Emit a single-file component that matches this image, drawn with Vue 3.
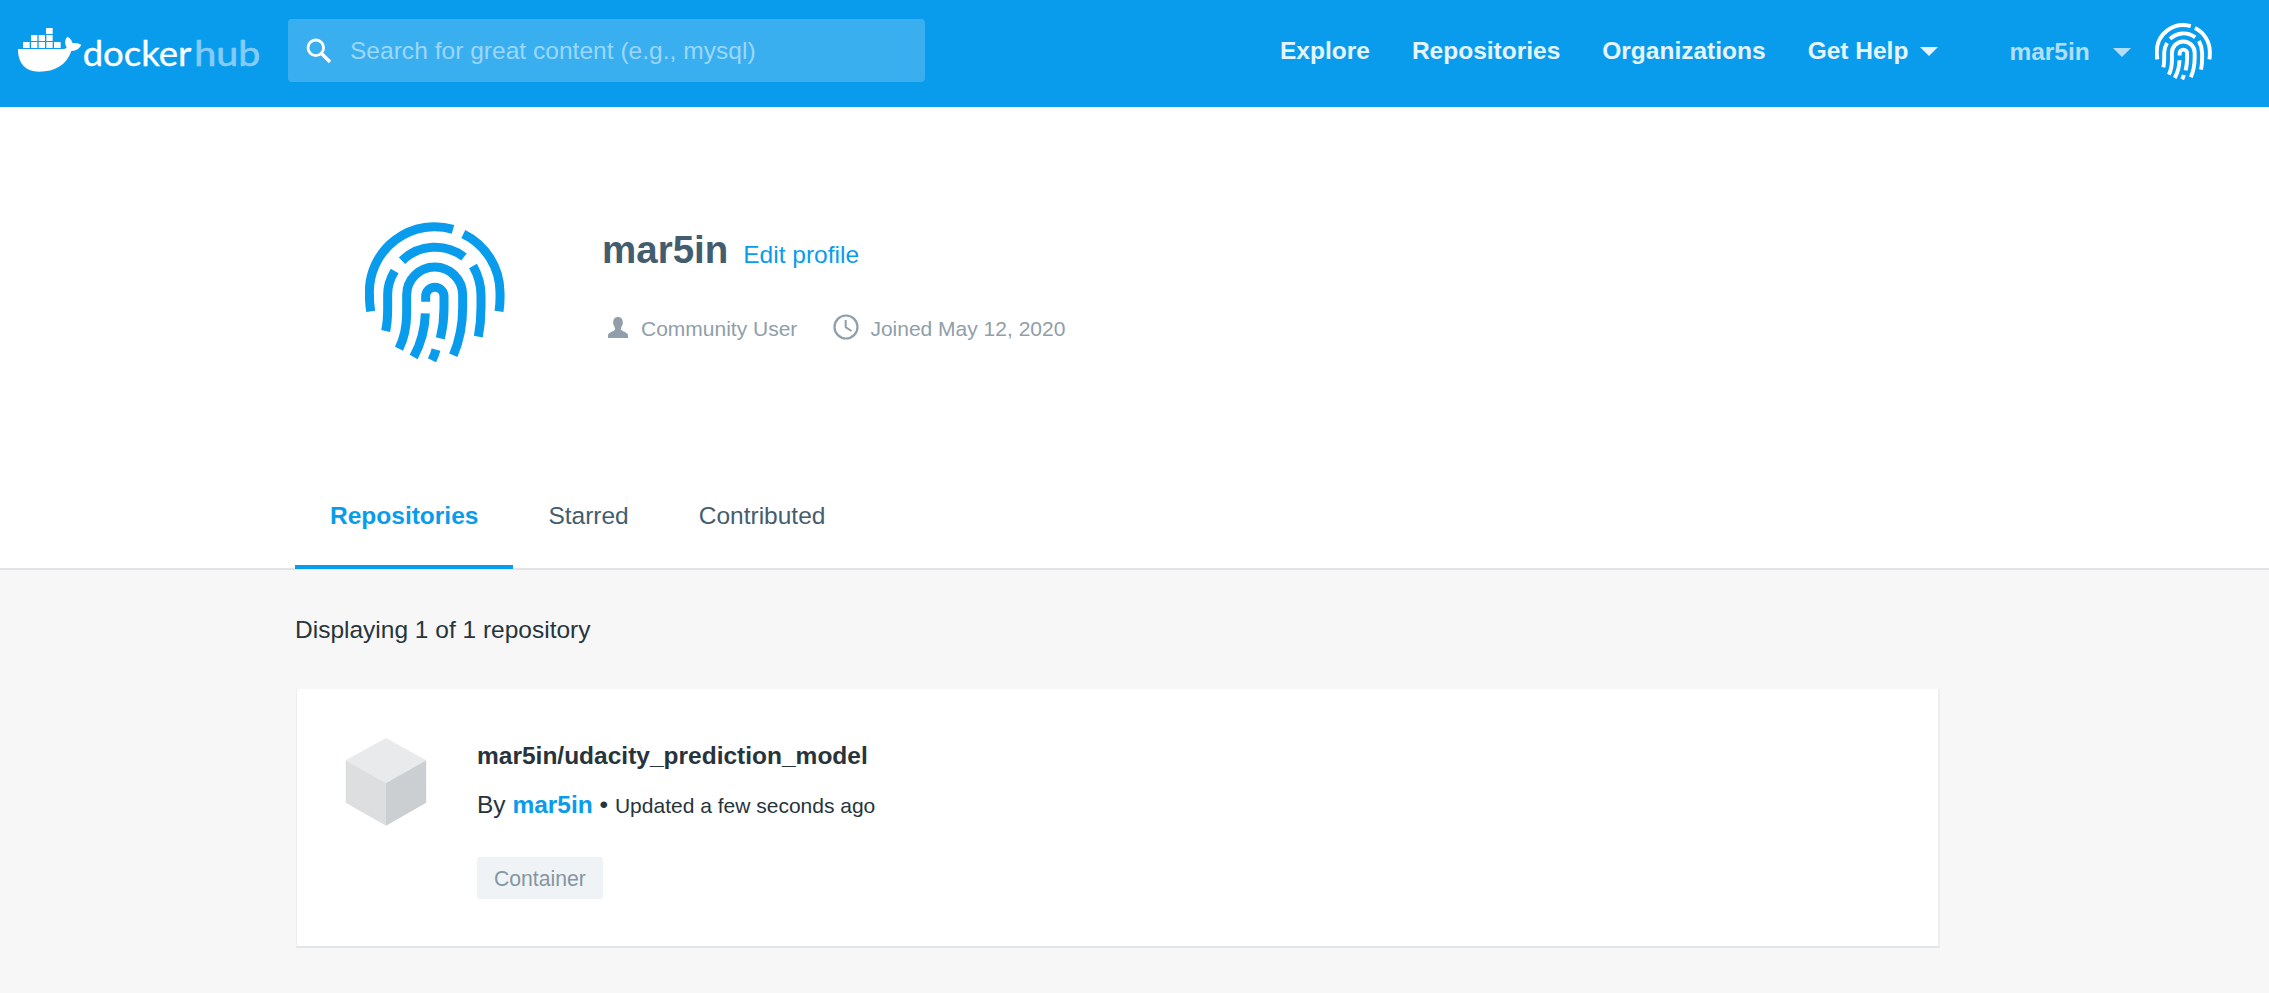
<script setup>
const navLinks = ['Explore', 'Repositories', 'Organizations']
const tabs = [
  { label: 'Repositories', active: true },
  { label: 'Starred', active: false },
  { label: 'Contributed', active: false },
]
const fingerprint = [
  'M93 334Q89 308 89 277A196 196 0 0 1 340 88',
  'M371 102A196 196 0 0 1 481 277Q482 308 478 334',
  'M187 182A143 143 0 0 1 373 171',
  'M165 213Q144 248 144 283V325Q144 365 138 393',
  'M400 198Q424 240 424 285V322Q424 368 416 410',
  'M178 446Q201 400 201 340V285A84 84 0 0 1 369 285V322Q369 400 341 466',
  'M258 305V289A27.500 27.500 0 0 1 313 289V325Q313 370 302 415',
  'M257 340Q255 410 222 471',
  'M289 449Q285 465 277 481',
]
</script>

<template>
  <div class="page">
    <header class="topbar">
      <svg class="logo" width="242" height="52" viewBox="54 78 726 156">
        <g fill="#fff">
          <rect x="138" y="84" width="20" height="18" />
          <rect x="93" y="105" width="19" height="18" />
          <rect x="116" y="105" width="19" height="18" />
          <rect x="139" y="105" width="19" height="18" />
          <rect x="69" y="126" width="20" height="18" />
          <rect x="93" y="126" width="19" height="18" />
          <rect x="116" y="126" width="19" height="18" />
          <rect x="139" y="126" width="19" height="18" />
          <rect x="162" y="126" width="20" height="18" />
          <path d="M54 147H188Q196 147 200 143C193 131 194 119 202 110Q215 117 218 130Q232 127 244 134Q237 152 214 153C199 195 166 215 117 215C75 215 53 188 54 147Z" />
        </g>
        <text class="word" x="248" y="197" textLength="326" lengthAdjust="spacingAndGlyphs" font-size="104" fill="#fff" stroke="#fff" stroke-width="1">docker</text>
        <text class="word" x="583" y="199" textLength="198" lengthAdjust="spacingAndGlyphs" font-size="104" fill="#86cbf7" stroke="#86cbf7" stroke-width="2">hub</text>
      </svg>
      <div class="search">
        <svg width="26" height="26" viewBox="0 0 26 26" fill="none" stroke="#fff">
          <circle cx="9.800" cy="9.800" r="7.800" stroke-width="2.800" />
          <path d="M15.500 15.500L24 24" stroke-width="3.400" />
        </svg>
        <span class="placeholder">Search for great content (e.g., mysql)</span>
      </div>
      <nav class="nav">
        <a v-for="link in navLinks" :key="link">{{ link }}</a>
        <a class="help">Get Help<svg width="18" height="9" viewBox="0 0 18 9"><path d="M0 0H18L9 9Z" fill="currentColor" /></svg></a>
      </nav>
      <div class="account">
        <span>mar5in</span>
        <svg width="18" height="9" viewBox="0 0 18 9"><path d="M0 0H18L9 9Z" fill="currentColor" /></svg>
      </div>
      <svg class="avatar" width="57" height="57" viewBox="76 65 421 421" fill="none" stroke="#fff" stroke-width="29">
        <path v-for="d in fingerprint" :key="d" :d="d" />
      </svg>
    </header>

    <section class="profile">
      <div class="identity">
        <svg width="140" height="140" viewBox="76 66 420 420" fill="none" stroke="#099cec" stroke-width="27">
          <path v-for="d in fingerprint" :key="d" :d="d" />
        </svg>
        <div class="details">
          <div class="name-row">
            <h1>mar5in</h1>
            <a>Edit profile</a>
          </div>
          <div class="meta">
            <svg class="person" width="20" height="21" viewBox="0 0 20 21" fill="#8f9ea8">
              <path d="M10 0C13 0 15 2 14.800 6C14.600 9 13 10 12.800 11.500C12.800 15 20 14.500 20 18.500V21H0V18.500C0 14.500 7.200 15 7.200 11.500C7 10 5.400 9 5.200 6C5 2 7 0 10 0Z" />
            </svg>
            <span class="role">Community User</span>
            <svg class="clock" width="26" height="26" viewBox="0 0 26 26" fill="none" stroke="#8f9ea8">
              <circle cx="13" cy="13" r="11.500" stroke-width="2.200" />
              <path d="M12.700 6V13.300L18.500 17" stroke-width="2" />
            </svg>
            <span class="joined">Joined May 12, 2020</span>
          </div>
        </div>
      </div>
      <div class="tabs">
        <a v-for="tab in tabs" :key="tab.label" :class="{ active: tab.active }">{{ tab.label }}</a>
      </div>
    </section>

    <main class="results">
      <p class="count">Displaying 1 of 1 repository</p>
      <article class="card">
        <svg class="cube" width="82" height="90" viewBox="0 0 82 90">
          <path d="M41 1L81.200 23.300L41 46L.700 23.300Z" fill="#e8eaeb" />
          <path d="M.700 23.300L41 46V88.700L.700 65.700Z" fill="#dcdee0" />
          <path d="M81.200 23.300L41 46V88.700L81.200 65.700Z" fill="#cbcfd2" />
        </svg>
        <div class="info">
          <h2>mar5in/udacity_prediction_model</h2>
          <p class="byline">By <b>mar5in</b> • <span>Updated a few seconds ago</span></p>
          <span class="tag">Container</span>
        </div>
      </article>
    </main>
  </div>
</template>

<style>
body {
  margin: 0;
  background: #f7f7f7;
}
</style>

<style scoped>
.page {
  height: 993px;
  overflow: hidden;
  font-family: "Liberation Sans", Arial, sans-serif;
  font-size: 24.5px;
  line-height: 30px;
  color: #27343c;
  background: #f7f7f7;
}
h1, h2, p {
  margin: 0;
}
svg {
  display: block;
  flex: none;
}
.topbar {
  box-sizing: border-box;
  height: 107px;
  padding: 0 0 6px 18px;
  display: flex;
  align-items: center;
  background: #099cec;
  white-space: nowrap;
}
.logo {
  margin-top: 3px;
}
.word {
  font-family: Lato, sans-serif;
}
.search {
  box-sizing: border-box;
  width: 637px;
  height: 63px;
  margin-left: 28px;
  padding-left: 18px;
  display: flex;
  align-items: center;
  gap: 17px;
  border-radius: 4px;
  background: #3aaff0;
}
.placeholder {
  padding-left: 1px;
  color: #9dd7f8;
  letter-spacing: 0.03px;
}
.nav {
  margin-left: 355px;
  display: flex;
  gap: 42px;
  font-weight: bold;
  color: #e6f5fd;
}
.help {
  display: flex;
  align-items: center;
  gap: 12px;
}
.help svg {
  margin-top: 2px;
}
.account {
  margin: 3px 0 0 71px;
  display: flex;
  align-items: center;
  gap: 23px;
  font-weight: bold;
  color: #b3def9;
}
.avatar {
  margin-left: 24px;
  margin-top: 1px;
}
.profile {
  box-sizing: border-box;
  height: 463px;
  padding: 115px 0 0 295px;
  display: flex;
  flex-direction: column;
  justify-content: space-between;
  border-bottom: 2px solid #e1e4e7;
  background: #fff;
}
.identity {
  display: flex;
  padding-left: 70px;
}
.details {
  padding: 5px 0 0 97px;
}
.name-row {
  display: flex;
  align-items: baseline;
  gap: 15px;
}
h1 {
  font-size: 38.5px;
  line-height: 46px;
  color: #445d6e;
}
.name-row a {
  color: #099cec;
}
.meta {
  margin-top: 40px;
  height: 26px;
  display: flex;
  align-items: center;
  font-size: 21px;
  color: #8f9ea8;
}
.person {
  margin: 2px 13px 0 6px;
}
.role {
  margin-top: 6px;
}
.clock {
  margin: 1px 11px 0 36px;
}
.joined {
  margin-top: 6px;
}
.tabs {
  display: flex;
  margin-bottom: -1px;
}
.tabs a {
  padding: 0 35px 34px;
  border-bottom: 4px solid transparent;
  color: #445d6e;
}
.tabs .active {
  font-weight: bold;
  color: #099cec;
  border-color: #099cec;
}
.results {
  padding: 45px 0 0 295px;
}
.card {
  box-sizing: border-box;
  width: 1644px;
  height: 259px;
  margin: 44px 0 0 1px;
  padding: 48px 0 0 48px;
  display: flex;
  background: #fff;
  border: 1px solid #eceef0;
  border-width: 0 2px 2px 1px;
  border-bottom-color: #e1e5e9;
}
.info {
  margin-left: 50px;
  padding-top: 4px;
}
h2 {
  font-size: 24.5px;
  line-height: 30px;
}
.byline {
  margin-top: 19px;
}
.byline b {
  color: #099cec;
}
.byline span {
  font-size: 21px;
}
.tag {
  display: inline-block;
  margin-top: 36px;
  padding: 0 17px;
  height: 42px;
  line-height: 43px;
  border-radius: 3px;
  font-size: 21.2px;
  color: #8496a2;
  background: #eff3f6;
}
</style>
